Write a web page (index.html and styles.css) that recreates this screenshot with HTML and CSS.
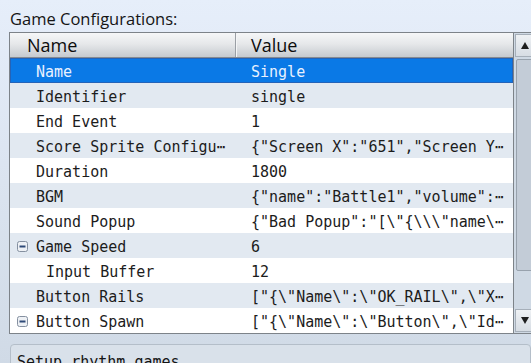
FILE: index.html
```html
<!DOCTYPE html>
<html lang="en">
<head>
    <meta charset="UTF-8">
    <title>Game Configurations</title>
    <link rel="stylesheet" href="styles.css">
</head>
<body>
    <div class="page">
        <p class="caption">Game Configurations:</p>

        <div class="grid">
            <div class="tree">
                <div class="head">
                    <div class="head-cell name">Name</div>
                    <div class="head-cell value">Value</div>
                </div>

                <div class="row selected">
                    <div class="cell name">Name</div>
                    <div class="cell value">Single</div>
                </div>
                <div class="row">
                    <div class="cell name">Identifier</div>
                    <div class="cell value">single</div>
                </div>
                <div class="row">
                    <div class="cell name">End Event</div>
                    <div class="cell value">1</div>
                </div>
                <div class="row">
                    <div class="cell name">Score Sprite Configu⋯</div>
                    <div class="cell value">{"Screen X":"651","Screen Y⋯</div>
                </div>
                <div class="row">
                    <div class="cell name">Duration</div>
                    <div class="cell value">1800</div>
                </div>
                <div class="row">
                    <div class="cell name">BGM</div>
                    <div class="cell value">{"name":"Battle1","volume":⋯</div>
                </div>
                <div class="row">
                    <div class="cell name">Sound Popup</div>
                    <div class="cell value">{"Bad Popup":"[\"{\\\"name\⋯</div>
                </div>
                <div class="row">
                    <div class="cell name"><svg class="toggle" width="11" height="11" viewBox="0 0 11 11">
                            <rect x="0.5" y="0.5" width="10" height="10" rx="2" fill="#eef1f5" stroke="#8590a0"/>
                            <rect x="2.5" y="4.5" width="6" height="2" fill="#2e4a78"/>
                        </svg>Game Speed</div>
                    <div class="cell value">6</div>
                </div>
                <div class="row">
                    <div class="cell name child">Input Buffer</div>
                    <div class="cell value">12</div>
                </div>
                <div class="row">
                    <div class="cell name">Button Rails</div>
                    <div class="cell value">["{\"Name\":\"OK_RAIL\",\"X⋯</div>
                </div>
                <div class="row">
                    <div class="cell name"><svg class="toggle" width="11" height="11" viewBox="0 0 11 11">
                            <rect x="0.5" y="0.5" width="10" height="10" rx="2" fill="#eef1f5" stroke="#8590a0"/>
                            <rect x="2.5" y="4.5" width="6" height="2" fill="#2e4a78"/>
                        </svg>Button Spawn</div>
                    <div class="cell value">["{\"Name\":\"Button\",\"Id⋯</div>
                </div>
            </div>

            <div class="scrollbar">
                <div class="sb-button"><span class="arrow up"></span></div>
                <div class="sb-track">
                    <div class="sb-thumb"></div>
                </div>
                <div class="sb-button"><span class="arrow down"></span></div>
            </div>
        </div>

        <div class="help">Setup rhythm games.</div>
    </div>
</body>
</html>
```

FILE: styles.css
```css
html, body {
    margin: 0;
    height: 100%;
    overflow: hidden;
}
body {
    background: linear-gradient(#e6eefa, #d0dae6);
    font-family: 'Open Sans', 'Liberation Sans', sans-serif;
    color: #141414;
}
.page {
    padding-left: 9px;
    width: 522px;
    overflow: hidden;
}
.caption {
    margin: 8px 0 3px 1px;
    font-size: 16.5px;
    line-height: 21px;
}
.grid {
    display: flex;
    width: 524px;
    border: 1px solid #7d8389;
    background-color: #cfd9e4;
}
.tree {
    flex: none;
    width: 503px;
    border-right: 1px solid #7d8389;
    background-color: #ffffff;
}
.head {
    display: flex;
    height: 24px;
    border-bottom: 1px solid #858a91;
    background: linear-gradient(#f6f7f8, #e6e8ea 45%, #c6cacf);
    font-size: 18px;
    line-height: 24px;
    color: #0c0c0c;
}
.head-cell.name {
    width: 208px;
    padding-left: 17px;
    border-right: 1px solid #9a9fa5;
    box-shadow: 1px 0 0 #f4f5f6;
}
.head-cell.value {
    padding-left: 15px;
}
.row {
    display: flex;
    height: 25px;
    font-family: 'DejaVu Sans Mono', 'Liberation Mono', monospace;
    font-size: 15px;
    color: #1c1c1c;
    white-space: nowrap;
}
.row:nth-child(odd) {
    background-color: #e2e9f1;
}
.row.selected {
    background-color: #0a79e6;
    box-shadow: inset 0 0 0 1px #2463b8;
    color: #e8f1ff;
}
.cell {
    line-height: 21px;
    padding-top: 4px;
    overflow: hidden;
}
.cell.name {
    width: 200px;
    padding-left: 26px;
    position: relative;
}
.cell.name.child {
    width: 190px;
    padding-left: 36px;
}
.cell.value {
    padding-left: 15px;
}
.toggle {
    position: absolute;
    left: 7px;
    top: 8px;
}
.scrollbar {
    display: flex;
    flex-direction: column;
    width: 20px;
    padding-left: 1px;
}
.sb-button {
    height: 21px;
    margin: 1px 0;
    border: 1px solid #a6afb9;
    background: linear-gradient(#eef1f4, #d7dde4);
    display: flex;
    align-items: center;
    padding-left: 5px;
}
.arrow {
    width: 0;
    height: 0;
    border-left: 4px solid transparent;
    border-right: 4px solid transparent;
}
.arrow.up {
    border-bottom: 7px solid #1e1e1e;
}
.arrow.down {
    border-top: 7px solid #1e1e1e;
}
.sb-track {
    flex: 1;
    padding-top: 1px;
}
.sb-thumb {
    height: 210px;
    margin-left: 1px;
    border: 1px solid #98a2ad;
    border-radius: 2px;
    background-color: #c3ccd7;
}
.help {
    margin: 10px 0 0 1px;
    height: 40px;
    border: 1px solid #b4bec9;
    border-radius: 4px;
    background-color: #d9e1ea;
    padding: 7px 6px;
    font-family: 'DejaVu Sans Mono', 'Liberation Mono', monospace;
    font-size: 15px;
    line-height: 21px;
}
```
